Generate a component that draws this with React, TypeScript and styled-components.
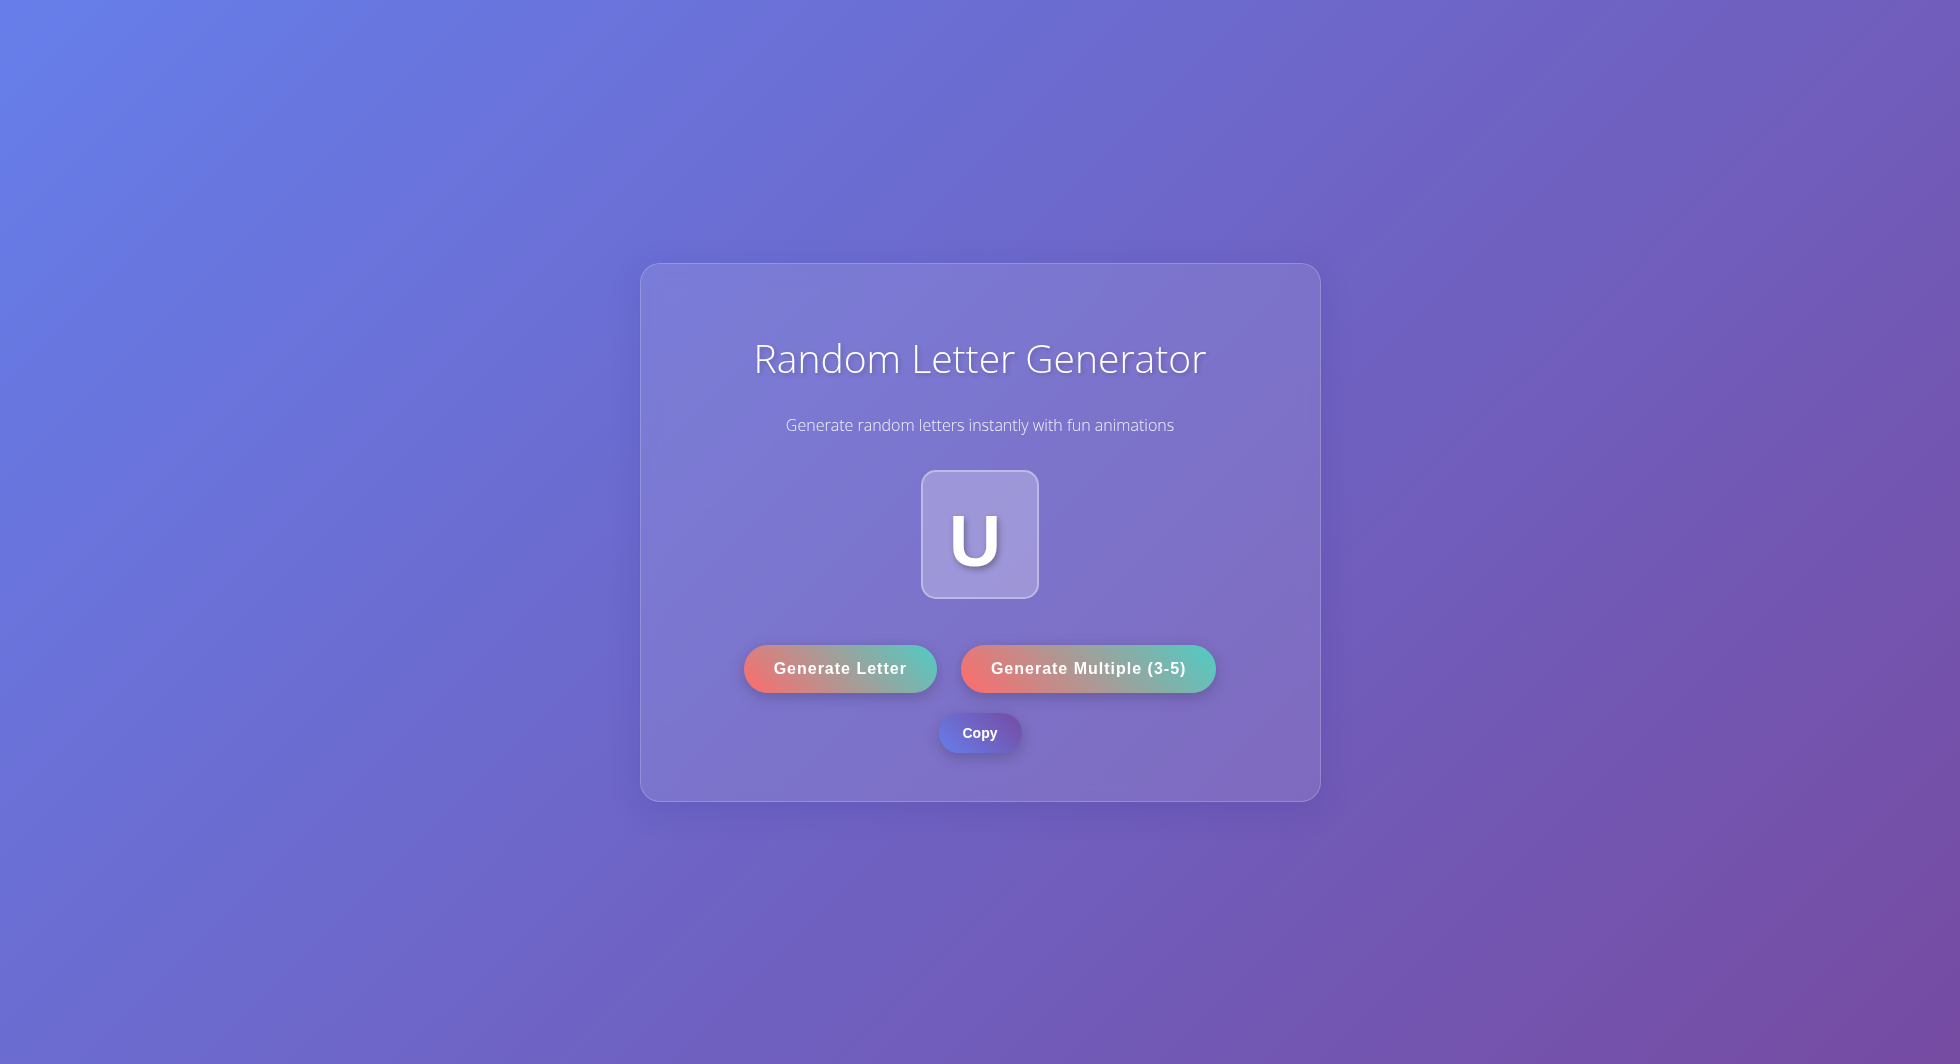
import React, { useState } from 'react';
import styled, { createGlobalStyle } from 'styled-components';

const GlobalStyle = createGlobalStyle`
    * {
        box-sizing: border-box;
    }
    html,
    body {
        margin: 0;
        padding: 0;
    }
    body {
        font-family: 'Open Sans', 'Liberation Sans', sans-serif;
        background: linear-gradient(135deg, #667eea 0%, #764ba2 100%);
        min-height: 100vh;
    }
`;

const LETTERS = 'ABCDEFGHIJKLMNOPQRSTUVWXYZ';

const randomLetter = () => LETTERS[Math.floor(Math.random() * LETTERS.length)];

const App: React.FC = () => {
    const [letters, setLetters] = useState<string>('U');

    const generateOne = () => setLetters(randomLetter());

    const generateMany = () => {
        const count = 3 + Math.floor(Math.random() * 3);
        setLetters(Array.from({ length: count }, randomLetter).join(''));
    };

    const copy = () => {
        navigator.clipboard?.writeText(letters).catch(() => undefined);
    };

    return (
        <>
            <GlobalStyle />
            <Page>
                <Card>
                    <Title>Random Letter Generator</Title>
                    <Subtitle>Generate random letters instantly with fun animations</Subtitle>
                    <LetterBox>{letters}</LetterBox>
                    <ButtonRow>
                        <GenerateButton onClick={generateOne}>Generate Letter</GenerateButton>
                        <GenerateButton onClick={generateMany}>Generate Multiple (3-5)</GenerateButton>
                    </ButtonRow>
                    <CopyButton onClick={copy}>Copy</CopyButton>
                </Card>
            </Page>
        </>
    );
};

export default App;

const Page = styled.div`
    min-height: 100vh;
    display: flex;
    align-items: center;
    justify-content: center;
`;

const Card = styled.div`
    width: 681px;
    padding: 48px 40px 48px;
    display: flex;
    flex-direction: column;
    align-items: center;
    background: rgba(255, 255, 255, 0.1);
    border: 1px solid rgba(255, 255, 255, 0.2);
    border-radius: 20px;
    box-shadow: 0 8px 32px rgba(31, 38, 135, 0.15);
    backdrop-filter: blur(10px);
`;

const Title = styled.h1`
    margin: 22px 0 0;
    font-size: 39px;
    font-weight: 300;
    line-height: 48px;
    color: #ffffff;
    text-shadow: 2px 2px 4px rgba(0, 0, 0, 0.2);
`;

const Subtitle = styled.p`
    margin: 31px 0 0;
    font-size: 16px;
    font-weight: 300;
    line-height: 24px;
    color: rgba(255, 255, 255, 0.9);
`;

const LetterBox = styled.div`
    margin-top: 33px;
    padding: 33px 26px 20px 26px;
    min-width: 115px;
    height: 129px;
    text-align: center;
    font-family: 'Liberation Sans', Arial, sans-serif;
    font-size: 72px;
    font-weight: 700;
    line-height: 72px;
    letter-spacing: 10px;
    color: #ffffff;
    text-shadow: 2px 3px 6px rgba(0, 0, 0, 0.3);
    background: rgba(255, 255, 255, 0.25);
    border: 2px solid rgba(255, 255, 255, 0.35);
    border-radius: 15px;
`;

const ButtonRow = styled.div`
    margin-top: 46px;
    display: flex;
    gap: 24px;
    justify-content: center;
`;

const PillButton = styled.button`
    border: none;
    border-radius: 50px;
    color: #ffffff;
    font-family: 'Liberation Sans', Arial, sans-serif;
    font-weight: 700;
    cursor: pointer;
`;

const GenerateButton = styled(PillButton)`
    padding: 15px 30px;
    font-size: 16px;
    line-height: 18px;
    letter-spacing: 1px;
    background: linear-gradient(45deg, #ff6b6b, #4ecdc4);
    box-shadow: 0 4px 15px rgba(0, 0, 0, 0.2);
`;

const CopyButton = styled(PillButton)`
    margin-top: 20px;
    padding: 12px 24px;
    font-size: 14px;
    line-height: 16px;
    background: linear-gradient(45deg, #667eea, #764ba2);
    box-shadow: 0 4px 15px rgba(0, 0, 0, 0.2);
`;
